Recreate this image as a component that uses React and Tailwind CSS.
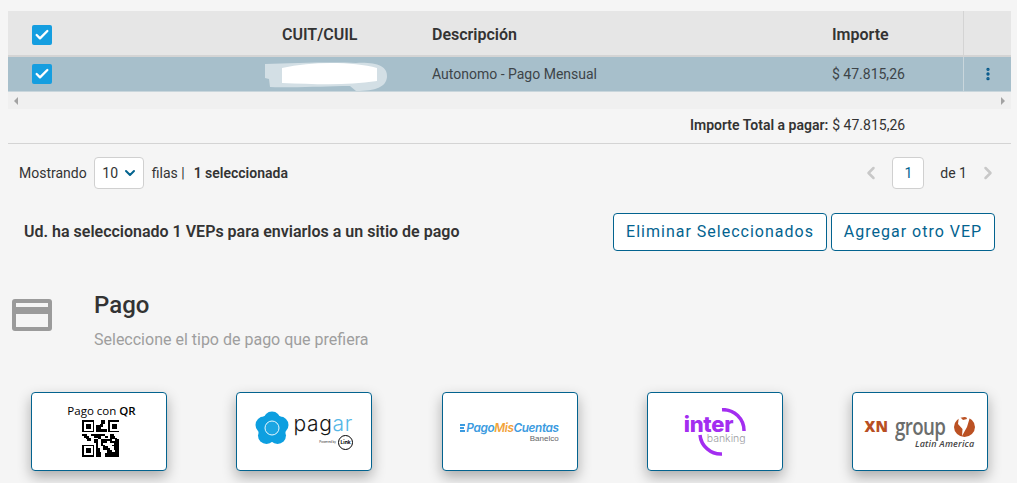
import { Check, ChevronDown, ChevronLeft, ChevronRight, EllipsisVertical } from "lucide-react";

const QR = [
  "111111100001100111111",
  "100000100001100100000",
  "101110100011000101110",
  "101110101111000101110",
  "101110101110000101110",
  "100000101111110100000",
  "111111101111110111111",
  "000000000000000000000",
  "111001111111100011000",
  "011100011110011011100",
  "001110000110000011110",
  "000110011001111110011",
  "000000011001110011111",
  "000000001001000000111",
  "111111101001100001111",
  "100000101000111000111",
  "101110101100111100111",
  "101110101100001110011",
  "101110101110001111111",
  "100000101110011111111",
  "111111101110011111111",
];

function Tick() {
  return (
    <span className="flex h-5 w-5 items-center justify-center rounded-[2px] bg-[#159ee0]">
      <Check className="h-4 w-4 text-white" strokeWidth={3.5} />
    </span>
  );
}

function PayCard({ children }) {
  return (
    <div className="flex h-[79px] w-[136px] items-center justify-center overflow-hidden rounded-[4px] border border-[#03638f] bg-white shadow-[0_6px_14px_rgba(0,0,0,0.3)]">
      {children}
    </div>
  );
}

function QrLogo() {
  return (
    <div className="flex flex-col items-center pb-[3px] pl-[5px]">
      <span className="font-['Open_Sans'] text-[11.5px] leading-[15px] text-black">
        Pago con <b className="font-semibold">QR</b>
      </span>
      <svg width="37" height="37" viewBox="0 0 21 21" shapeRendering="crispEdges" className="mt-[2px] -translate-x-[1px]">
        {QR.map((row, y) =>
          row.split("").map((c, x) => (c === "1" ? <rect key={x + "-" + y} x={x} y={y} width="1" height="1" fill="#000" /> : null))
        )}
      </svg>
    </div>
  );
}

function PagarLogo() {
  return (
    <div className="flex items-start pb-[4px]">
      <svg width="34" height="34" viewBox="0 0 34 34" className="mt-[1px]">
        <g fill="#0d9fe0">
          <circle cx="17" cy="9" r="8.5" />
          <circle cx="25" cy="14" r="8.5" />
          <circle cx="22.5" cy="24.5" r="8.5" />
          <circle cx="11.5" cy="24.5" r="8.5" />
          <circle cx="9" cy="14" r="8.5" />
          <circle cx="17" cy="17" r="14" />
        </g>
        <circle cx="17" cy="17" r="7" fill="#1ca6e3" stroke="#eaf8fe" strokeWidth="1" />
      </svg>
      <div className="ml-[4px] flex flex-col items-end">
        <span className="mt-[3px] font-['Inter'] text-[21px] font-light leading-[22px] tracking-[0.7px] text-[#161616]">
          pag<span className="text-[#56b7e6]">ar</span>
        </span>
        <div className="flex items-center gap-[2px]">
          <span className="font-['Inter'] text-[3px] leading-none text-[#333]">Powered by</span>
          <span className="flex h-[15px] w-[15px] items-center justify-center rounded-full border border-black font-['Inter'] text-[5px] font-bold leading-none text-black">
            Link
          </span>
        </div>
      </div>
    </div>
  );
}

function PmcLogo() {
  return (
    <div className="flex flex-col items-end">
      <span className="flex items-center font-['Inter'] text-[11.8px] font-semibold italic leading-[14px] tracking-[-0.4px] text-[#3c9be0]">
        <span className="mr-[1px] flex flex-col gap-[1.5px]">
          <i className="block h-[1.5px] w-[5px] bg-[#3c9be0]" />
          <i className="block h-[1.5px] w-[4px] bg-[#3c9be0]" />
          <i className="block h-[1.5px] w-[5px] bg-[#3c9be0]" />
        </span>
        Pago<span className="text-[#f2a33a]">Mis</span>Cuentas
      </span>
      <span className="font-['Liberation_Sans'] text-[8px] leading-[7px] text-[#666]">Banelco</span>
    </div>
  );
}

function InterLogo() {
  return (
    <div className="relative h-[48px] w-[62px]">
      <svg width="62" height="48" viewBox="0 0 62 48" className="absolute inset-0">
        <path d="M38 1.7 A21 21 0 0 1 60 23" fill="none" stroke="#a32df0" strokeWidth="3.5" />
        <path d="M16 27 A21 21 0 0 0 38 46" fill="none" stroke="#a32df0" strokeWidth="3.5" />
      </svg>
      <span className="absolute left-0 top-[7px] font-['Inter'] text-[22px] font-extrabold leading-[18px] tracking-[-0.3px] text-[#a32df0]">
        inter
      </span>
      <span className="absolute left-[23px] top-[25px] font-['Inter'] text-[10.5px] font-light leading-[12px] text-[#9a9ba1]">
        banking
      </span>
    </div>
  );
}

function XnLogo() {
  return (
    <div className="flex flex-col items-end">
      <div className="flex items-center">
        <span className="mr-[7px] font-['Open_Sans'] text-[15px] font-extrabold leading-none text-[#b84f23]">XN</span>
        <span className="mr-[-11px] origin-left font-['Open_Sans'] text-[24px] font-semibold leading-[24px] tracking-[-0.8px] text-[#6b6d6c] [transform:scaleX(0.78)]">
          group
        </span>
        <svg width="21" height="21" viewBox="0 0 21 21" className="ml-[6px]">
          <ellipse cx="10.5" cy="11" rx="10.5" ry="10" fill="#bb5123" />
          <path d="M5 0 L9 4 L13 3 L12 0 L16 1 L13 11 L8 20 L8.5 13 L4 8 Z" fill="#fff" />
        </svg>
      </div>
      <span className="mr-[1px] font-['Open_Sans'] text-[9px] font-semibold italic leading-[11px] tracking-[0.2px] text-[#444]">
        Latin America
      </span>
    </div>
  );
}

export default function App() {
  return (
    <div className="h-[483px] overflow-hidden bg-[#f5f5f5] pl-2 pr-[6px] pt-[11px] font-['Roboto',sans-serif] text-sm text-[#333]">
      {/* tabla */}
      <div className="box-content flex h-[41px] items-center border-b-2 border-[#d4d4d4] bg-[#e6e6e6] pt-[3px] text-base font-semibold">
        <div className="w-[274px] pl-6">
          <Tick />
        </div>
        <div className="w-[150px]">CUIT/CUIL</div>
        <div className="w-[400px]">Descripción</div>
        <div className="w-[131px]">Importe</div>
        <div className="-mt-[3px] box-content h-full flex-1 border-l border-[#d4d4d4] pt-[3px]" />
      </div>
      <div className="flex h-[35px] items-center border-b border-[#c9d6dc] bg-[#a7bfcb] text-[#3d4448]">
        <div className="w-[274px] pl-6">
          <Tick />
        </div>
        <div className="w-[150px] self-stretch">
          <svg width="126" height="34" viewBox="0 0 126 34" className="-ml-[18px]">
            <path d="M1 7 C30 6 70 5 92 6 C112 5 124 9 123 20 C122 30 112 34 92 34 L86 29 C60 29 40 31 6 30 L5 22 L1 21 Z" fill="#fff" fillOpacity="0.5" />
            <path d="M18 11 C50 4 90 5 113 11 L113 24 C80 29 50 27 18 26 Z" fill="#fff" />
          </svg>
        </div>
        <div className="w-[400px]">Autonomo - Pago Mensual</div>
        <div className="w-[131px]">$ 47.815,26</div>
        <div className="flex h-full flex-1 items-center justify-center border-l border-[#c9d6dc]">
          <EllipsisVertical className="h-4 w-4 text-[#03578a]" strokeWidth={3} />
        </div>
      </div>
      <div className="flex h-[17px] items-center justify-between bg-[#f0f0f0] px-[6px]">
        <span className="h-0 w-0 border-y-[4px] border-r-[4px] border-y-transparent border-r-[#a3a3a3]" />
        <span className="h-0 w-0 border-y-[4px] border-l-[4px] border-y-transparent border-l-[#a3a3a3]" />
      </div>
      <div className="flex h-[35px] items-center border-b border-[#d4d4d4] pb-[2px] pl-[682px]">
        <b className="font-semibold">Importe Total a pagar:</b>
        <span className="ml-1">$ 47.815,26</span>
      </div>

      {/* paginacion */}
      <div className="mt-[13px] flex h-8 items-center pl-[11px]">
        <span>Mostrando</span>
        <div className="ml-[7px] flex h-8 w-[50px] items-center justify-center gap-1 rounded-[4px] border border-[#d0d0d0] bg-white pl-[3px]">
          <span>10</span>
          <ChevronDown className="h-4 w-4 text-[#03638f]" strokeWidth={3} />
        </div>
        <span className="ml-2">filas |</span>
        <b className="ml-[9px] font-semibold">1 seleccionada</b>
        <div className="ml-auto flex items-center pr-[13px]">
          <ChevronLeft className="h-5 w-5 text-[#c8c8c8]" strokeWidth={3} />
          <div className="ml-[11px] flex h-8 w-8 items-center justify-center rounded-[4px] border border-[#d0d0d0] bg-white text-[#03638f]">
            1
          </div>
          <span className="ml-4">de 1</span>
          <ChevronRight className="ml-[11px] h-5 w-5 text-[#c8c8c8]" strokeWidth={3} />
        </div>
      </div>

      {/* seleccion */}
      <div className="mt-[24px] flex h-[38px] items-center pl-4 pr-[16px]">
        <b className="text-base font-semibold">Ud. ha seleccionado 1 VEPs para enviarlos a un sitio de pago</b>
        <button className="ml-auto h-[38px] w-[214px] rounded-[4px] border border-[#03638f] bg-white text-base tracking-[1px] text-[#03638f]">
          Eliminar Seleccionados
        </button>
        <button className="ml-1 h-[38px] w-[164px] rounded-[4px] border border-[#03638f] bg-white text-base tracking-[1px] text-[#03638f]">
          Agregar otro VEP
        </button>
      </div>

      {/* pago */}
      <div className="mt-[40px] flex pl-1">
        <svg width="40" height="32" viewBox="0 0 40 32" className="mt-[8px] shrink-0">
          <rect x="0" y="0" width="40" height="32" rx="3" fill="#9b9b9b" />
          <rect x="4" y="4" width="32" height="4" fill="#f5f5f5" />
          <rect x="4" y="15" width="32" height="13" fill="#f5f5f5" />
        </svg>
        <div className="ml-[42px]">
          <h2 className="text-[24px] font-medium leading-[28px] text-[#333]">Pago</h2>
          <p className="mt-[12px] text-base leading-[18px] text-[#9e9e9e]">Seleccione el tipo de pago que prefiera</p>
        </div>
      </div>

      <div className="mt-[43px] flex justify-between pl-[23px] pr-[23px]">
        <PayCard>
          <QrLogo />
        </PayCard>
        <PayCard>
          <PagarLogo />
        </PayCard>
        <PayCard>
          <PmcLogo />
        </PayCard>
        <PayCard>
          <InterLogo />
        </PayCard>
        <PayCard>
          <XnLogo />
        </PayCard>
      </div>
    </div>
  );
}
